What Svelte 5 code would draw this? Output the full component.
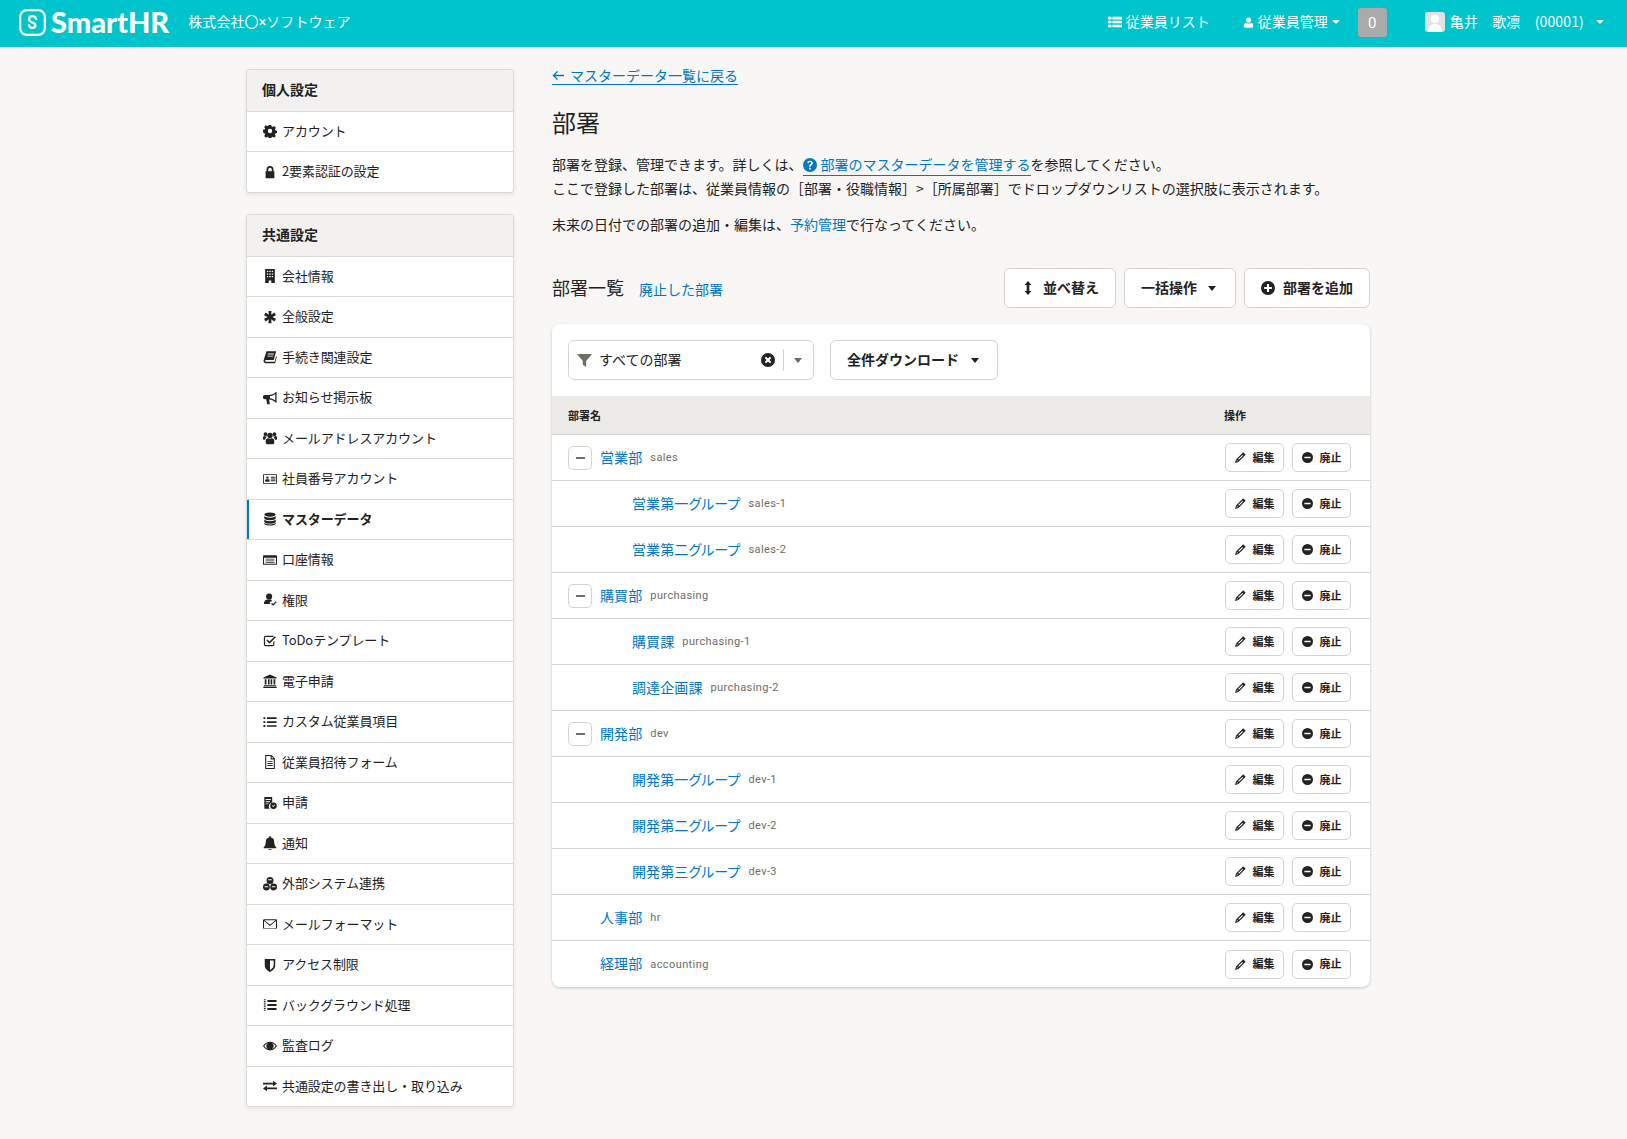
<script>
  const I = {
    gear: '<path fill-rule="evenodd" d="M6.600 1h2.800l.4 1.900 1.200.5 1.700-1 1.900 1.900-1 1.700.5 1.200 1.900.4v2.800l-1.900.4-.5 1.200 1 1.700-1.900 1.900-1.700-1-1.200.5-.4 1.900H6.600l-.4-1.900-1.200-.5-1.700 1-1.900-1.900 1-1.700-.5-1.200L0 9.400V6.600l1.900-.4.500-1.200-1-1.700 1.900-1.900 1.700 1 1.200-.5zM8 5.500a2.500 2.500 0 1 0 0 5 2.500 2.500 0 0 0 0-5z"/>',
    lock: '<path fill-rule="evenodd" d="M4 7V5a4 4 0 0 1 8 0v2h1v8H3V7zm2 0h4V5a2 2 0 0 0-4 0z"/>',
    building: '<path fill-rule="evenodd" d="M2.500 0h11v16h-4v-3h-3v3h-4zM4.500 2v1.500H6V2zm2.700 0v1.500h1.600V2zM10 2v1.500h1.500V2zM4.500 5v1.500H6V5zm2.700 0v1.500h1.600V5zM10 5v1.500h1.500V5zM4.500 8v1.500H6V8zm2.700 0v1.500h1.600V8zM10 8v1.500h1.500V8z"/>',
    asterisk: '<path d="M6.300 1h3.400l-.3 4.300 3.700-2.400 1.700 3L10.800 8l4 2.100-1.700 3-3.700-2.400.3 4.300H6.300l.3-4.300-3.700 2.400-1.700-3L5.200 8l-4-2.100 1.700-3 3.700 2.400z"/>',
    book: '<path d="M4 1.500h11l-2.700 10H3.500c-.8 0-1 .5-1 1s.3 1 1 1h9.800l1.700-6.500.8.700-2 7.300H3c-1.700 0-2.700-1.400-2.300-3.200zM5.500 4v1h6.800l.3-1zm-.6 2.500v1h6.700l.3-1z"/>',
    bullhorn: '<path fill-rule="evenodd" d="M15.500 1v12.500h-.8C13 11.500 10 10 7 9.800l.8 5.200H4.800L3.700 9.500H2C.9 9.500 0 8.600 0 7.500v-1C0 5.400.9 4.500 2 4.500h4.500C9.500 4.500 13 3 14.700 1zM14 3.300C12.500 4.600 10 5.600 8 5.800v2.600c2 .2 4.500 1.200 6 2.500z"/>',
    users: '<circle cx="8" cy="5" r="3"/><circle cx="2.900" cy="3.600" r="2.100"/><circle cx="13.100" cy="3.600" r="2.100"/><path d="M3.700 9.500c.8-1 1.700-1.300 2.500-1.100.6.300 1.200.4 1.800.4s1.200-.1 1.800-.4c.8-.2 1.700.1 2.500 1.100.7 1 .7 3.500.5 4.500-.3.700-1 1-1.700 1H4.900c-.7 0-1.400-.3-1.700-1-.2-1-.2-3.500.5-4.500zM0 7.500c0-1 .6-1.800 1.400-1.800.9.500 1.800.6 2.700.2l.4.700C3.200 7.500 2.700 8.500 2.500 10H1C.3 10 0 9.500 0 8.800zm16 0c0-1-.6-1.800-1.400-1.800-.9.500-1.800.6-2.700.2l-.4.700c1.300.9 1.800 1.900 2 3.400H15c.7 0 1-.5 1-1.200z"/>',
    card: '<path fill-rule="evenodd" d="M1 2.500h14c.6 0 1 .4 1 1v9c0 .6-.4 1-1 1H1c-.6 0-1-.4-1-1v-9c0-.6.400-1 1-1zm0 1v9h14v-9zM5 5a1.300 1.300 0 1 1 0 2.700A1.300 1.300 0 0 1 5 5zM2.500 11V9.500c0-.7.600-1.200 1.200-1.200h2.600c.6 0 1.200.5 1.200 1.200V11zM9 5.500h5.200v1H9zm0 2h5.200v1H9zm0 2h5.200v1H9z"/>',
    db: '<path d="M8 .5c3.600 0 6.500 1 6.500 2.400S11.600 5.400 8 5.400 1.500 4.300 1.500 2.900 4.400.5 8 .5zM1.500 4.700c1 1.200 3.700 1.900 6.500 1.900s5.500-.7 6.500-1.900v2.400c0 1.300-2.900 2.300-6.500 2.300S1.500 8.400 1.500 7.100zm0 4c1 1.200 3.700 1.900 6.500 1.900s5.500-.7 6.500-1.900v2.400c0 1.300-2.900 2.300-6.500 2.300S1.500 12.400 1.500 11.100zm0 3.700c1 1.200 3.700 1.900 6.500 1.900s5.500-.7 6.500-1.900v1c0 1.300-2.900 2.100-6.500 2.100s-6.500-.8-6.500-2.100z"/>',
    list2: '<path fill-rule="evenodd" d="M1 2.500h14c.6 0 1 .4 1 1v9c0 .6-.4 1-1 1H1c-.6 0-1-.4-1-1v-9c0-.6.400-1 1-1zm.2 3v6.800h13.600V5.500zM3 6.500h10v1H3zm0 2h10v1H3zm0 2h10v1H3z"/>',
    perm: '<circle cx="7" cy="4" r="3.500"/><path d="M4.500 7.500h5l.8 1.500-2.800 1.500 1 2H1c0-2.500 1.500-4.500 3.500-5zM9.300 12.500l1-1 1.300 1.200 3-3.200 1 1-4 4.200z"/>',
    check: '<path fill-rule="evenodd" d="M3 2h9.500l-1.200 1.300H3c-.4 0-.7.300-.7.700v8c0 .4.300.7.700.7h8c.4 0 .7-.3.7-.7V9l1.300-1.300V12c0 1.100-.9 2-2 2H3c-1.100 0-2-.9-2-2V4c0-1.100.9-2 2-2z"/><path d="M3.800 7.500l1.300-1.300 2.300 2.300 6-6 1.300 1.300-7.300 7.400z"/>',
    bank: '<path d="M8 .5l7.500 3.500v1.200H.5V4zM2 6h2v6H2zm3.700 0h1.800v6H5.700zm3 0h1.800v6H8.700zM12 6h2v6h-2zM1 12.800h14V14H1zM.3 14.500h15.400V16H.3z"/>',
    ul: '<path d="M.5 2.500h2.200v2.200H.5zM.5 7h2.200v2.200H.5zM.5 11.500h2.200v2.200H.5zM4.500 2.700H15.500v1.800H4.500zM4.500 7.200H15.500V9H4.500zM4.500 11.700H15.500v1.800H4.500z"/>',
    file: '<path fill-rule="evenodd" d="M2.500 0h7.300l3.700 3.700V16h-11zm1.200 1.200v13.600h8.600V5H8.700V1.200zm6.200.4V3.800h2.200zM5 7h6v1H5zm0 2.200h6v1H5zm0 2.300h6v1H5z"/>',
    req: '<path fill-rule="evenodd" d="M1.500 1h9v6.300a4.500 4.500 0 0 0-3 7.200H1.500zM3 3.500v1h6v-1zm0 2.500v1h5v-1zm0 2.500v1h3v-1z"/><path fill-rule="evenodd" d="M12 7.500a3.700 3.700 0 1 1 0 7.500 3.700 3.700 0 0 1 0-7.500zm-1.900 3.600l1.500 1.500 2.400-2.400-.6-.6-1.800 1.800-.9-.9z"/>',
    bell: '<path d="M8 0c.6 0 1 .4 1 1v.8c2.300.4 3.800 2.200 3.800 4.700 0 3.500 1 5 2.500 6.500v1H.7v-1C2.200 11.500 3.200 10 3.200 6.500c0-2.500 1.500-4.300 3.800-4.700V1c0-.6.400-1 1-1zM6 15h4c0 .6-.9 1-2 1s-2-.4-2-1z"/>',
    cubes: '<path fill-rule="evenodd" d="M8 0a4 4 0 1 1 0 8 4 4 0 0 1 0-8zM3.900 7.500a3.900 3.900 0 1 1 0 7.800 3.900 3.900 0 0 1 0-7.800zM12.100 7.500a3.900 3.900 0 1 1 0 7.800 3.900 3.900 0 0 1 0-7.800z"/><path fill="#fff" d="M6 2.700h4v1H6zM1.900 10.700h4v1h-4zM10.100 10.700h4v1h-4zM7.400 8.300h1.200v1.500H7.400z"/>',
    mail: '<path fill-rule="evenodd" d="M1.500 2.500h13c.8 0 1.500.7 1.500 1.500v8c0 .8-.7 1.500-1.500 1.500h-13C.7 13.500 0 12.800 0 12V4c0-.8.700-1.500 1.500-1.500zm.100 1.200L8 8.800l6.400-5.100zM1.200 4.700v7.600c0 .3.200.5.500.5h12.600c.3 0 .5-.2.500-.5V4.700L8 10.300z"/>',
    shield: '<path fill-rule="evenodd" d="M2 1h12v7c0 4-3 6.500-6 8-3-1.500-6-4-6-8zm6 1.800v11c2.200-1.300 4.200-3.200 4.200-5.800V2.800z"/>',
    bg: '<path d="M5 2.300h10.500v2.200H5zM5 6.900h10.500v2.200H5zM5 11.500h10.500v2.200H5zM1 1.500h2v1H1zM1 3.500h2v1H1zM1 5.500h2v1H1zM1 7.500h2v1H1zM1 9.500h2v1H1zM1 11.500h2v1H1zM1 13.500h2v1H1z"/>',
    eye: '<path fill-rule="evenodd" d="M8 3c3.400 0 6.300 2 8 5-1.700 3-4.600 5-8 5s-6.300-2-8-5c1.700-3 4.600-5 8-5zM1.500 8c1 1.700 2.500 2.900 4.100 3.500a4.300 4.300 0 0 1 0-7C4 5.100 2.500 6.300 1.500 8zm13 0c-1-1.700-2.500-2.900-4.100-3.500a4.300 4.300 0 0 1 0 7c1.600-.6 3.100-1.800 4.100-3.500z"/><circle cx="8" cy="8" r="3.300"/>',
    swap: '<path d="M11.500 2l4.500 3.200-4.500 3.300V6.200H0V4.300h11.500zM4.500 7.500v2.300H16v1.900H4.500V14L0 10.800z"/>',
    th: '<path d="M0 2h4v3H0zM5 2h11v3H5zM0 6.500h4v3H0zM5 6.500h11v3H5zM0 11h4v3H0zM5 11h11v3H5z"/>',
    user: '<circle cx="8" cy="4.500" r="3.700"/><path d="M3.500 8.500C5 9.800 11 9.800 12.500 8.500c1.500.5 2.500 2.500 2.500 5 0 1.300-.7 2-2 2H3c-1.300 0-2-.7-2-2 0-2.500 1-4.500 2.500-5z"/>',
    funnel: '<path d="M0 1h16L9.800 8.500V15L6.200 12.500v-4z"/>',
    sort: '<path d="M8 0l4 4.500H9.500v7H12L8 16l-4-4.500h2.500v-7H4z"/>',
    plus: '<path fill-rule="evenodd" d="M8 0a8 8 0 1 1 0 16A8 8 0 0 1 8 0zM6.800 3.500v3.300H3.500v2.400h3.300v3.300h2.400V9.200h3.300V6.800H9.200V3.500z"/>',
    minus: '<path fill-rule="evenodd" d="M8 0a8 8 0 1 1 0 16A8 8 0 0 1 8 0zM3.500 6.800v2.400h9V6.800z"/>',
    x: '<path fill-rule="evenodd" d="M8 0a8 8 0 1 1 0 16A8 8 0 0 1 8 0zM5.800 4.200L4.200 5.800 6.400 8l-2.200 2.200 1.600 1.600L8 9.600l2.200 2.200 1.600-1.600L9.600 8l2.200-2.200-1.600-1.600L8 6.400z"/>',
    pencil: '<path fill-rule="evenodd" d="M12 .5l3.500 3.500L5 14.500 0 16l1.500-5zM3 11.600l-.7 2.100 2.100-.7zM4.600 10.300l1.100 1.100 6-6L10.600 4.300z"/>',
    q: '<path fill-rule="evenodd" d="M8 0a8 8 0 1 1 0 16A8 8 0 0 1 8 0zM7 11v2h2v-2zM8 3C6.300 3 5 4 4.800 5.700l1.800.3c.1-.8.600-1.300 1.400-1.300.7 0 1.300.5 1.300 1.100 0 1.200-2.300 1.300-2.300 3.700V10h1.900v-.4c0-1.500 2.400-1.600 2.400-3.900C11.300 4 9.800 3 8 3z"/>'
  };
  const group1 = [['gear', 'アカウント'], ['lock', '2要素認証の設定']];
  const group2 = [
    ['building', '会社情報'], ['asterisk', '全般設定'], ['book', '手続き関連設定'], ['bullhorn', 'お知らせ掲示板'],
    ['users', 'メールアドレスアカウント'], ['card', '社員番号アカウント'], ['db', 'マスターデータ', true], ['list2', '口座情報'],
    ['perm', '権限'], ['check', 'ToDoテンプレート'], ['bank', '電子申請'], ['ul', 'カスタム従業員項目'],
    ['file', '従業員招待フォーム'], ['req', '申請'], ['bell', '通知'], ['cubes', '外部システム連携'],
    ['mail', 'メールフォーマット'], ['shield', 'アクセス制限'], ['bg', 'バックグラウンド処理'], ['eye', '監査ログ'],
    ['swap', '共通設定の書き出し・取り込み']
  ];
  const rows = [
    ['営業部', 'sales', 0, true], ['営業第一グループ', 'sales-1', 1], ['営業第二グループ', 'sales-2', 1],
    ['購買部', 'purchasing', 0, true], ['購買課', 'purchasing-1', 1], ['調達企画課', 'purchasing-2', 1],
    ['開発部', 'dev', 0, true], ['開発第一グループ', 'dev-1', 1], ['開発第二グループ', 'dev-2', 1], ['開発第三グループ', 'dev-3', 1],
    ['人事部', 'hr', 0], ['経理部', 'accounting', 0]
  ];
</script>

{#snippet icon(name, cls = '')}
  <svg class="ic {cls}" viewBox="0 0 16 16" aria-hidden="true">{@html I[name]}</svg>
{/snippet}
{#snippet caret(cls = '')}
  <span class="caret {cls}"></span>
{/snippet}
{#snippet side(title, items)}
  <section class="side-card">
    <h2>{title}</h2>
    {#each items as [ic, label, active]}
      <a class="side-item" class:active href="#top">
        <span class="side-ic">{@render icon(ic)}</span><span class="side-label">{label}</span>
      </a>
    {/each}
  </section>
{/snippet}

<header class="top">
  <div class="logo">
    <svg class="logo-mark" viewBox="0 0 27 27" aria-hidden="true">
      <rect x="1.200" y="1.200" width="24.600" height="24.600" rx="6.500" fill="none" stroke="#fff" stroke-width="2.200"/>
      <path d="M17.200 10c-.5-1.800-2-2.800-3.700-2.800-2 0-3.500 1.300-3.500 3 0 1.300.9 2.200 2.200 2.800l2.500 1.100c1.100.5 1.800 1.200 1.800 2.200 0 1.500-1.400 2.600-3 2.600-1.600 0-3-1-3.500-2.600" fill="none" stroke="#fff" stroke-width="2.300" stroke-linecap="round"/>
    </svg>
    <span class="logo-text">SmartHR</span>
  </div>
  <span class="company">株式会社〇<span class="times">×</span>ソフトウェア</span>
  <nav class="nav">
    <a class="nav-a n1" href="#top">{@render icon('th')}<span class="lift">従業員リスト</span></a>
    <a class="nav-a n2" href="#top">{@render icon('user')}<span class="lift">従業員管理</span>{@render caret('white')}</a>
    <span class="badge">0</span>
    <span class="avatar"><svg viewBox="0 0 20 20" aria-hidden="true"><rect width="20" height="20" rx="3" fill="#dfe3e4"/><circle cx="10" cy="7" r="4.200" fill="#fff"/><path d="M3 20c0-6 3-8 7-8s7 2 7 8z" fill="#fff"/></svg></span>
    <span class="uname lift">亀井　歌凛　(00001)</span>
    {@render caret('white last')}
  </nav>
</header>

<div class="page">
  <aside class="sidebar">
    {@render side('個人設定', group1)}
    {@render side('共通設定', group2)}
  </aside>

  <main class="main">
    <a class="back" href="#top">
      <svg class="arrow" viewBox="0 0 14 12" aria-hidden="true"><path d="M6 1.500L1.500 6 6 10.500M1.800 6H13" fill="none" stroke="#0077c7" stroke-width="1.500"/></svg>
      マスターデータ一覧に戻る
    </a>
    <h1>部署</h1>
    <p class="desc">部署を登録、管理できます。詳しくは、<a class="help" href="#top">{@render icon('q', 'blue')}部署のマスターデータを管理する</a>を参照してください。<br>ここで登録した部署は、従業員情報の［部署・役職情報］&gt;［所属部署］でドロップダウンリストの選択肢に表示されます。</p>
    <p class="desc second">未来の日付での部署の追加・編集は、<a href="#top">予約管理</a>で行なってください。</p>

    <div class="list-head">
      <h2>部署一覧</h2>
      <a class="abolished" href="#top">廃止した部署</a>
      <div class="actions">
        <button class="btn b1">{@render icon('sort')}<span class="up">並べ替え</span></button>
        <button class="btn b2"><span class="up">一括操作</span>{@render caret()}</button>
        <button class="btn b3">{@render icon('plus')}<span class="up">部署を追加</span></button>
      </div>
    </div>

    <section class="table-card">
      <div class="filters">
        <div class="select">
          {@render icon('funnel', 'gray')}
          <span class="sel-text">すべての部署</span>
          {@render icon('x')}
          <span class="sep"></span>
          {@render caret('gray')}
        </div>
        <button class="btn dl"><span class="up">全件ダウンロード</span>{@render caret()}</button>
      </div>
      <div class="thead"><span>部署名</span><span class="op">操作</span></div>
      {#each rows as [name, code, child, toggle]}
        <div class="row" class:child>
          {#if toggle}<span class="toggle"><span></span></span>{/if}
          <a class="name" href="#top">{name}</a>
          <span class="code">{code}</span>
          <div class="row-btns">
            <button class="mini">{@render icon('pencil')}<span class="up">編集</span></button>
            <button class="mini">{@render icon('minus')}<span class="up">廃止</span></button>
          </div>
        </div>
      {/each}
    </section>
  </main>
</div>

<style>
  :global(body) {
    margin: 0;
    background: #f8f7f6;
    color: #23221f;
    font-family: "Noto Sans CJK JP", "Noto Sans", sans-serif;
    font-size: 14px;
  }
  a { color: #0077c7; text-decoration: none; }
  h1, h2, p { margin: 0; font-weight: 400; }
  button { font-family: inherit; color: inherit; cursor: pointer; }
  .ic { width: 14px; height: 14px; fill: currentColor; flex: none; display: block; }
  .caret { width: 0; height: 0; border-style: solid; border-color: #23221f transparent transparent; border-width: 5px 4.500px 0; flex: none; }
  .caret.white { border-top-color: #fff; border-width: 4px 4px 0; }
  .caret.gray { border-top-color: #706d65; }
  .up { padding-bottom: 2px; }

  .top { height: 47px; box-sizing: border-box; padding: 0 0 3px 19px; background: #00c4cc; color: #fff; display: flex; align-items: center; }
  .logo { display: flex; align-items: center; gap: 5px; }
  .logo-mark { width: 27px; height: 27px; }
  .logo-text { font: 900 29px/44px Lato, sans-serif; letter-spacing: 0; }
  .company { margin-left: 19px; font-size: 14px; padding-bottom: 2px; letter-spacing: .1px; }
  .times { font-family: Roboto, sans-serif; }
  .nav { margin-left: auto; display: flex; align-items: center; padding-right: 23px; font-size: 14px; }
  .nav-a { color: #fff; display: flex; align-items: center; }
  .nav-a .ic { width: 14px; height: 14px; margin-right: 4px; }
  .n2 .ic { width: 11px; height: 11px; }
  .n2 { margin-left: 33px; }
  .n2 .caret { margin-left: 4px; }
  .lift { padding-bottom: 2px; }
  .badge { margin-left: 18px; width: 29px; height: 29px; border-radius: 3px; background: #aaa; text-align: center; font: 400 15px/30px Roboto, sans-serif; }
  .avatar { margin-left: 38px; width: 20px; height: 20px; }
  .avatar svg { display: block; }
  .uname { margin-left: 5px; letter-spacing: .15px; }
  .nav :global(.last) { margin-left: 12px; }

  .page { display: flex; align-items: flex-start; gap: 38px; padding: 22px 0 32px 246px; }
  .sidebar { width: 268px; flex: none; display: flex; flex-direction: column; gap: 21.500px; }
  .side-card { background: #fff; border: 1px solid #dcdad7; border-radius: 3px; box-shadow: 0 2px 4px rgba(0,0,0,.08); overflow: hidden; }
  .side-card h2 { background: #f2f1f0; padding-left: 15px; font-size: 14px; font-weight: 700; border-bottom: 1px solid #dcdad7; height: 40.500px; line-height: 38px; }
  .side-item { display: flex; align-items: center; height: 40.500px; box-sizing: border-box; color: #23221f; font-size: 13px; border-bottom: 1px solid #dcdad7; padding-left: 10px; letter-spacing: -.1px; }
  .side-item:last-child { border-bottom: 0; height: 39.500px; }
  .side-item.active { font-weight: 700; box-shadow: inset 2px 0 0 #0077c7; }
  .side-label { padding-bottom: 2px; }
  .side-ic { width: 25px; flex: none; display: flex; justify-content: center; }

  .main { width: 818px; flex: none; }
  .back { display: flex; width: fit-content; align-items: center; gap: 5px; height: 17px; line-height: 17px; border-bottom: 1px solid #0077c7; margin-top: -2px; font-size: 14px; }
  .arrow { width: 13px; height: 11px; }
  h1 { font-size: 24px; line-height: 32px; margin-top: 21px; }
  .desc { font-size: 14px; line-height: 24px; margin-top: 14px; }
  .desc.second { margin-top: 12px; }
  .help { border-bottom: 1px solid #0077c7; padding-bottom: 1px; }
  .help .ic { display: inline-block; width: 14px; height: 14px; vertical-align: -2px; margin-right: 4px; fill: #0077c7; }
  .list-head { display: flex; align-items: center; height: 40px; margin-top: 32px; }
  .list-head h2 { font-size: 18px; padding-bottom: 2px; }
  .abolished { margin-left: 15px; margin-top: 1px; }
  .actions { margin-left: auto; display: flex; gap: 8px; }
  .btn { height: 40px; border: 1px solid #d6d3d0; border-radius: 6px; background: #fff; font-size: 14px; font-weight: 700; display: flex; align-items: center; justify-content: center; padding: 0; }
  .b1 { width: 112px; gap: 8px; }
  .b2 { width: 112px; gap: 11px; padding-right: 3px; }
  .b3 { width: 126px; gap: 8px; }

  .table-card { margin-top: 16px; background: #fff; border-radius: 8px; box-shadow: 0 1px 3px rgba(0,0,0,.2); overflow: hidden; }
  .filters { display: flex; gap: 16px; padding: 16px; height: 72px; box-sizing: border-box; }
  .select { width: 246px; height: 40px; box-sizing: border-box; border: 1px solid #d6d3d0; border-radius: 6px; display: flex; align-items: center; padding: 0 11px 0 8px; }
  .select > .ic.gray { width: 15px; height: 15px; fill: #706d65; }
  .sel-text { margin-left: 7px; flex: 1; padding-bottom: 2px; }
  .sep { width: 1px; height: 22px; background: #d6d3d0; margin: 0 10px 0 8px; }
  .dl { width: 168px; gap: 12px; padding-right: 2px; }
  .thead { height: 39px; background: #edebe8; border-bottom: 1px solid #d6d3d0; box-sizing: border-box; display: flex; align-items: center; justify-content: space-between; padding-left: 16px; font-size: 11px; font-weight: 700; }
  .op { width: 146px; }
  .row { height: 46px; box-sizing: border-box; border-bottom: 1px solid #d6d3d0; display: flex; align-items: center; padding-left: 48px; position: relative; }
  .row:last-child { border-bottom: 0; }
  .row.child { padding-left: 80px; }
  .toggle { position: absolute; left: 16px; top: 11px; width: 24px; height: 24px; box-sizing: border-box; border: 1px solid #d6d3d0; border-radius: 5px; display: flex; align-items: center; justify-content: center; }
  .toggle span { width: 9px; height: 2px; background: #706d65; }
  .name { font-size: 14px; font-feature-settings: "palt"; letter-spacing: .1px; padding-bottom: 2px; }
  .code { margin-left: 8px; font: 400 11px Roboto, sans-serif; letter-spacing: .4px; color: #706d65; }
  .row-btns { margin-left: auto; margin-right: 19px; display: flex; gap: 8px; }
  .mini { width: 59px; height: 29px; border: 1px solid #d6d3d0; border-radius: 5px; background: #fff; font-size: 11px; font-weight: 700; display: flex; align-items: center; justify-content: center; gap: 7px; padding: 0; }
  .mini .ic { width: 11px; height: 11px; }
</style>
